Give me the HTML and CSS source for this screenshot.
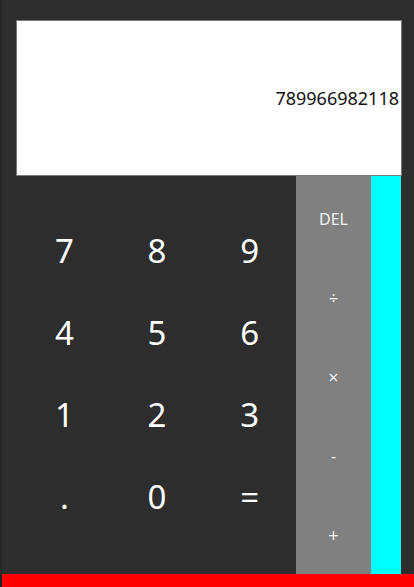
FILE: index.html
```html
<!DOCTYPE html>
<html>
<head>
<meta charset="utf-8">
<link rel="stylesheet" href="styles.css">
</head>
<body>
<div class="app">
  <div class="top">
    <div class="display">789966982118</div>
  </div>
  <div class="keys">
    <div class="digits">
      <div class="key">7</div><div class="key">8</div><div class="key">9</div>
      <div class="key">4</div><div class="key">5</div><div class="key">6</div>
      <div class="key">1</div><div class="key">2</div><div class="key">3</div>
      <div class="key">.</div><div class="key">0</div><div class="key">=</div>
    </div>
    <div class="ops">
      <div class="op del">DEL</div>
      <div class="op">÷</div>
      <div class="op big">×</div>
      <div class="op">-</div>
      <div class="op big">+</div>
    </div>
    <div class="accent"></div>
  </div>
  <div class="bar"></div>
</div>
</body>
</html>
```
FILE: styles.css
```css
html, body {
  margin: 0;
  padding: 0;
  background: #2d2d2d;
}
.app {
  width: 414px;
  height: 587px;
  box-sizing: border-box;
  border-left: 2px solid #242424;
  display: flex;
  flex-direction: column;
  font-family: "Noto Sans", "DejaVu Sans", sans-serif;
  color: #fff;
}
.top {
  padding: 20px 12px 0 14px;
}
.display {
  height: 156px;
  box-sizing: border-box;
  background: #fff;
  border: 1px solid #7a7a7a;
  color: #111;
  font-size: 18px;
  display: flex;
  align-items: center;
  justify-content: flex-end;
  padding-right: 2px;
}
.keys {
  height: 398px;
  display: flex;
  padding-left: 14px;
}
.digits {
  width: 280px;
  display: grid;
  grid-template-columns: repeat(3, 1fr);
  grid-template-rows: repeat(4, 82px);
  padding-top: 33px;
  padding-left: 2px;
  box-sizing: border-box;
}
.key {
  display: flex;
  align-items: center;
  justify-content: center;
  font-size: 33px;
}
.ops {
  width: 75px;
  background: #808080;
  display: grid;
  grid-template-rows: repeat(5, 1fr);
  padding-top: 4px;
  box-sizing: border-box;
}
.op {
  display: flex;
  align-items: center;
  justify-content: center;
  font-size: 16px;
  color: #f2f2f2;
}
.op.big {
  font-size: 18px;
}
.accent {
  width: 30px;
  background: #00ffff;
}
.bar {
  height: 13px;
  background: #ff0000;
}
```
